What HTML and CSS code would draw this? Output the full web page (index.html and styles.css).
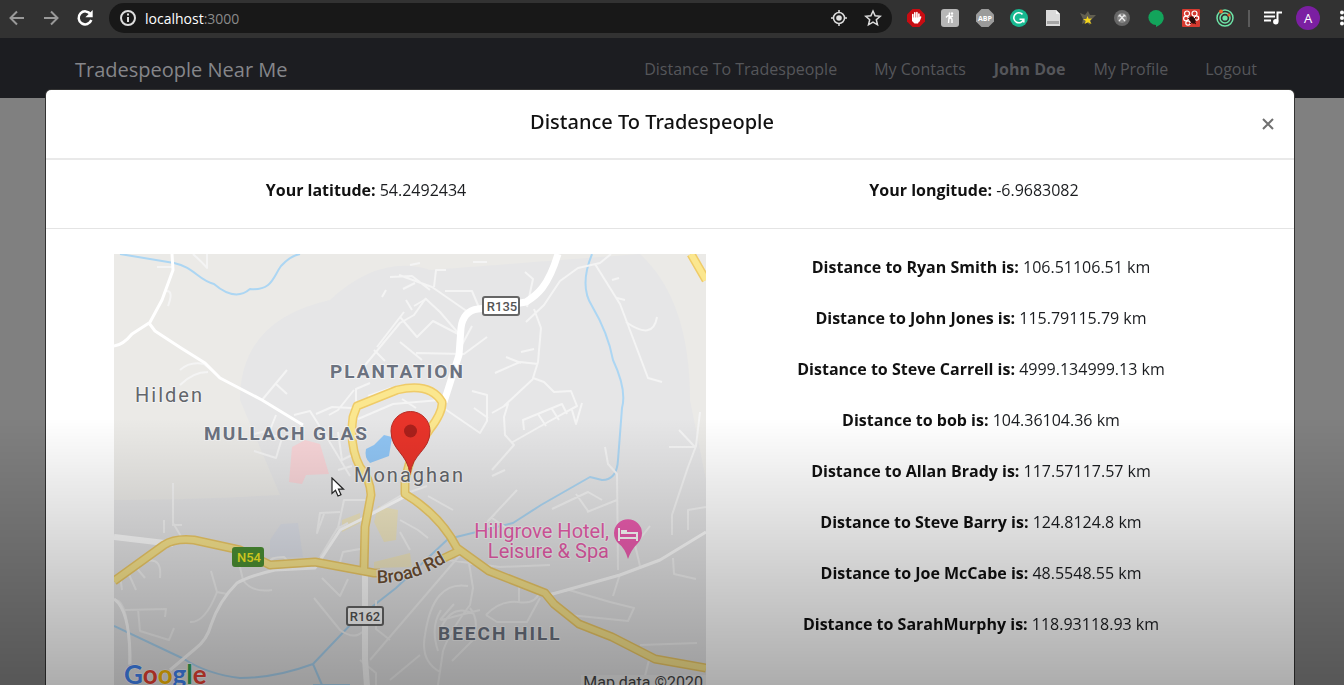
FILE: index.html
```html
<!DOCTYPE html>
<html lang="en">
<head>
<meta charset="utf-8">
<title>Tradespeople Near Me</title>
<link rel="stylesheet" href="styles.css">
</head>
<body>
<header class="toolbar">
  <div class="toolbar-nav">
    <button class="tool dim" aria-label="Back"><svg width="18" height="18" viewBox="0 0 18 18"><path d="M16 9H2.500M9 2.500L2.500 9L9 15.500" class="line"/></svg></button>
    <button class="tool dim" aria-label="Forward"><svg width="18" height="18" viewBox="0 0 18 18"><path d="M2 9H15.500M9 2.500L15.500 9L9 15.500" class="line"/></svg></button>
    <button class="tool" aria-label="Reload"><svg width="18" height="18" viewBox="0 0 18 18"><path d="M14.600 5.300A6.500 6.500 0 1 0 15.300 11" class="line thick"/><path d="M16.700 1V8.300H9.400Z" fill="currentColor"/></svg></button>
  </div>
  <div class="address">
    <button class="tool" aria-label="Site information"><svg width="18" height="18" viewBox="0 0 18 18"><circle cx="9" cy="9" r="7" class="line"/><path d="M9 8V13M9 4.600V6.600" class="line"/></svg></button>
    <span class="url" role="textbox" aria-label="Address" contenteditable="true" spellcheck="false">localhost<span class="port">:3000</span></span>
    <button class="tool" aria-label="Location"><svg width="18" height="18" viewBox="0 0 18 18"><circle cx="9" cy="9" r="5.500" class="line thin"/><circle cx="9" cy="9" r="2.800" fill="currentColor"/><path d="M9 1V4M9 14V17M1 9H4M14 9H17" class="line thin"/></svg></button>
    <button class="tool" aria-label="Bookmark"><svg width="18" height="18" viewBox="0 0 18 18"><path d="M9 2L11.100 6.800L16.200 7.300L12.300 10.700L13.500 15.800L9 13.100L4.500 15.800L5.700 10.700L1.800 7.300L6.900 6.800Z" class="line thin"/></svg></button>
  </div>
  <div class="extensions">
    <button class="tool" aria-label="Content blocker"><svg width="18" height="18" viewBox="0 0 18 18"><path d="M5.500 0H12.500L18 5.500V12.500L12.500 18H5.500L0 12.500V5.500Z" fill="#c80c12"/><path d="M5.800 10V5.500M7.800 9V3.800M9.900 9V3.500M11.900 10V5M13.600 8L12 12" stroke="#fff" stroke-width="1.600" stroke-linecap="round"/><path d="M5 8.500H12.700V11L11 14.500H7.500L5 12Z" fill="#fff"/></svg></button>
    <button class="tool" aria-label="Coupons"><svg width="18" height="18" viewBox="0 0 18 18"><rect width="18" height="18" rx="3" fill="#b7b7b7"/><path d="M8.500 3.500L7.500 14M5 8.500Q7 6 8 7T12 7M8 9.500Q11 8 11 11V14" fill="none" stroke="#fff" stroke-width="1.400"/><circle cx="11" cy="4.500" r="1.200" fill="#fff"/></svg></button>
    <button class="tool" aria-label="Ad filter"><svg width="18" height="18" viewBox="0 0 18 18"><path d="M5.500 0H12.500L18 5.500V12.500L12.500 18H5.500L0 12.500V5.500Z" fill="#9b9b9b"/><text x="9" y="12" class="abp">ABP</text></svg></button>
    <button class="tool" aria-label="Grammar"><svg width="18" height="18" viewBox="0 0 18 18"><circle cx="9" cy="9" r="9" fill="#17b890"/><path d="M12.500 5.400A5 5 0 1 0 13.600 10.300M9.500 10.200H13.800V13.400" fill="none" stroke="#fff" stroke-width="1.600"/></svg></button>
    <button class="tool" aria-label="Documents"><svg width="18" height="18" viewBox="0 0 18 18"><path d="M2 1H12L16 5V17H2Z" fill="#dadada"/><path d="M12 1V5H16" fill="#f5f5f5"/><path d="M3 12H15V15H3Z" fill="#a5a5a5"/></svg></button>
    <button class="tool" aria-label="Favourites"><svg width="18" height="18" viewBox="0 0 18 18"><path d="M1 4L6 6L9 2L11 6L17 6L12 11L11 16L7 13L3 15L4 10Z" fill="#625f51"/><path d="M8.500 7L9.700 9.700L13 9.500L10.800 11.700L12.500 15L9 13.200L5.500 15L6.800 12L4 10H7.300Z" fill="#f5d51b"/></svg></button>
    <button class="tool" aria-label="Tools"><svg width="18" height="18" viewBox="0 0 18 18"><circle cx="9" cy="9" r="8" fill="#666"/><circle cx="9" cy="9" r="5" fill="#888"/><path d="M6 12L11.500 6M12 12L6.500 6M5.500 7.500L7.500 5.500M10.500 5.500L12.500 7.500" stroke="#eee" stroke-width="1.200"/></svg></button>
    <button class="tool" aria-label="Chat"><svg width="18" height="18" viewBox="0 0 18 18"><path d="M9 14V18Q17 14.500 16.600 8.500Z" fill="#13a45b"/><circle cx="9" cy="8.500" r="7.600" fill="#13a45b"/></svg></button>
    <button class="tool" aria-label="Debugger"><svg width="18" height="18" viewBox="0 0 18 18"><rect width="18" height="18" rx="1" fill="#d63a30"/><g fill="none" stroke="#fff" stroke-width="1.200"><circle cx="5" cy="4.500" r="2.500"/><circle cx="12.500" cy="4.500" r="2.500"/><circle cx="4" cy="9.500" r="2.400"/><circle cx="14.500" cy="9" r="2.200"/><circle cx="6" cy="14" r="2.200"/></g><ellipse cx="10.500" cy="11" rx="2.500" ry="4" fill="#2b0d0b" transform="rotate(-35 10.500 11)"/><path d="M6 9L14 15M8 15L14 8" stroke="#2b0d0b"/></svg></button>
    <button class="tool" aria-label="Targets"><svg width="18" height="18" viewBox="0 0 18 18"><g fill="none" stroke="#6ee5a8" stroke-width="1.500"><circle cx="9" cy="9" r="8"/><circle cx="9" cy="9" r="5"/></g><circle cx="9" cy="9" r="2.600" fill="#6ee5a8"/><circle cx="5" cy="2.500" r="2" fill="#e8672e"/><circle cx="13" cy="6" r="1.500" fill="#e8672e"/></svg></button>
  </div>
  <span class="divider"></span>
  <button class="tool" aria-label="Media"><svg width="18" height="18" viewBox="0 0 18 18"><path d="M0 3.500H11M0 7.500H11M0 11.500H7M13.500 12.500V3.500H18" class="line"/><circle cx="11.800" cy="12.800" r="2.700" fill="currentColor"/></svg></button>
  <button class="avatar" aria-label="Account">A</button>
  <button class="tool more" aria-label="More"><svg width="6" height="18" viewBox="0 0 6 18"><g fill="currentColor"><circle cx="4" cy="3.500" r="2"/><circle cx="4" cy="9" r="2"/><circle cx="4" cy="14.500" r="2"/></g></svg></button>
</header>

<nav class="site-nav">
  <a class="brand" href="#">Tradespeople Near Me</a>
  <a class="nav-link" href="#">Distance To Tradespeople</a>
  <a class="nav-link wide" href="#">My Contacts</a>
  <a class="nav-link user" href="#">John Doe</a>
  <a class="nav-link" href="#">My Profile</a>
  <a class="nav-link wide" href="#">Logout</a>
</nav>

<div class="modal-layer">
  <section class="modal" role="dialog" aria-labelledby="modal-title">
    <div class="modal-header">
      <h1 class="modal-title" id="modal-title">Distance To Tradespeople</h1>
      <button class="close" aria-label="Close"><svg width="12" height="12" viewBox="0 0 12 12"><path d="M1 1L11 11M11 1L1 11" class="line"/></svg></button>
    </div>
    <div class="coords">
      <p class="row"><b>Your latitude:</b> 54.2492434</p>
      <p class="row"><b>Your longitude:</b> -6.9683082</p>
    </div>
    <div class="modal-body">
      <svg class="map" viewBox="114 254 592 460" role="img" aria-label="Map of Monaghan">
        <rect x="114" y="254" width="592" height="460" fill="#ebeae7"/>
        <path d="M240 400Q240 320 330 300Q380 254 430 270L640 254Q690 300 690 400L706 480V714H114V500Q180 500 280 495Z" fill="#e6e6e7"/>
        <path d="M292 447L305 440L320 444L329 474L306 475L302 484L289 482Z" fill="#f8d5d8"/>
        <path d="M366 449L374 445L384 435L392 437L389 456L370 463Q364 458 366 449Z" fill="#90c5f4"/>
        <path d="M281 524L298 523L303 557L270 557L270 540Z" fill="#dfe2ea"/>
        <path d="M378 506L398 510L396 540L384 542L374 522ZM342 520L360 513L360 523L342 532ZM374 562L410 553L412 567L374 568Z" fill="#f1e8c4"/>
        <g class="water">
          <path d="M120 254L174 263C194 267 198 280 214 284Q235 302 250 289C272 291 273 277 281 266Q290 256 300 254"/>
          <path d="M592 254Q579 286 592 306Q608 333 613 360Q627 390 622 408L618 460Q617 480 602 480L590 477L541 505L513 523L448 539L396 588L354 621L313 664Q275 678 240 678Q207 674 184 659L114 626M313 664L322 685M313 685H350"/>
        </g>
        <g class="minor">
          <path d="M193 254Q204 264 207 268V254M157 267H172M166 291Q174 290 168 306M180 370Q190 361 204 364L216 374M180 385Q193 372 208 372M262 400L287 370M276 384L287 394M254 451L276 458L282 438M294 415L310 411L329 441L350 476M316 414L332 407L352 408M356 408L356 389L370 383M354 390L338 410L329 415M356 376L400 323L414 315L426 298"/>
          <path d="M374 350L385 361M377 347L404 312M390 277L412 276L430 290M399 275L432 287L468 312M434 287L436 270L446 270M445 291L472 291L480 310M414 306L426 299L440 312L459 334M400 317L417 337L433 321L458 334M400 342L422 360M416 353L464 354L487 337M457 354L472 326M391 388L368 396M358 419L393 404L440 400M402 399L416 408"/>
          <path d="M445 409L480 433L487 421V395L472 391M492 413L508 404L504 417L505 435L514 445L492 470M511 443L548 422L577 406L571 391L554 392L544 382L533 378L538 362L541 328L534 309M524 430L523 420L562 404L567 414M538 414L546 426M552 409L559 420M572 410L576 424L582 403M504 406L533 379M495 373L520 362L538 364M506 357L521 363M534 349L521 352M526 322L544 305L560 281L578 268L600 263L611 254M595 264L620 304L628 325L648 378L662 382M612 280L619 278M617 298L625 300M626 322Q653 341 657 317M527 307L533 279L525 272M473 262H487"/>
          <path d="M605 447L608 464L617 474L618 570M700 412L696 446L688 467L672 515L672 535M695 447H669M679 430L695 447M552 509L588 492L602 500M576 494L588 511M587 512L617 500M495 514L488 521L517 490M492 518L508 529M505 470L492 476M173 483V523L182 538M164 520V533M172 525L182 525M324 514L317 533L320 513L340 512M320 557L337 529L348 523M338 528L344 500H370M360 520L410 490M400 532L410 550M360 549L343 552L338 569M322 578L340 596L348 579M270 563Q269 557 284 557L290 564M239 563L243 580Q252 593 272 590"/>
          <path d="M120 575L122 590M127 570L136 590M134 565L145 578M148 561Q162 558 160 578M211 571L217 592L227 594M217 592Q205 623 190 622M116 600Q130 602 129 665M125 610L166 609L165 617M138 609L140 631L169 640L174 628M314 598L340 630Q354 640 362 632M370 660L460 555M376 600V629L390 640M440 559L500 567L550 565M469 563L473 588L470 605Q450 631 443 651L438 685M468 586Q433 580 425 635Q420 661 440 672M470 608Q480 620 473 640L452 661M440 630Q452 602 474 614M441 620L480 610M441 610Q430 627 438 651M440 620L454 604M486 615Q500 600 518 602Q536 605 540 591M486 615L497 622L527 622L540 598M519 585V602M544 595L569 590L610 602L634 608L628 621L560 614M640 645L697 643M649 660L645 676M613 596L620 574M640 566L635 545L650 526M673 558L674 574L696 579M688 530V510L706 507M400 520L418 530L428 538M410 492L427 486M428 496L453 510M360 660L376 673V685M390 680L420 655"/>
          <path d="M382 297L386 290M276 415L270 430L254 434M266 434L294 440M338 432L342 460L352 455M338 470L352 466M410 265L420 263M403 289L415 283M406 300L412 310M474 408L488 418"/>
        </g>
        <g class="road">
          <path d="M172 254L173 270L162 300L149 324M114 346Q123 345 132 334L149 323L155 331L181 348L205 363L220 378L262 400L280 411L303 425"/>
          <path d="M114 599Q129 609 130 655V664M170 670L195 649Q207 640 211 625Q219 601 237 583Q249 576 275 570L315 568L340 530L360 520L406 496"/>
          <path d="M549 595L620 575L660 560L706 532"/>
        </g>
        <path class="road medium" d="M114 537L173 544M365 570V659L369 714"/>
        <path class="road major" d="M558 254C548 287 537 295 526 302L508 305L478 309Q463 311 461 328L459 355L444 402"/>
        <path class="highway-edge" d="M114 581L164 545Q175 538 194 540L240 550L270 565L315 562L374 573H380M364 570L365 527L371 495Q370 478 360 467Q349 446 353 417L357 406L397 390Q430 382 442 402Q443 412 430 429L411 457L405 480V494Q440 515 457 548L489 571L512 580L545 593L554 604L579 624L612 637L655 659L706 668M440 560L461 550M691 254L706 280"/>
        <path class="highway" d="M114 581L164 545Q175 538 194 540L240 550L270 565L315 562L374 573H380M364 570L365 527L371 495Q370 478 360 467Q349 446 353 417L357 406L397 390Q430 382 442 402Q443 412 430 429L411 457L405 480V494Q440 515 457 548L489 571L512 580L545 593L554 604L579 624L612 637L655 659L706 668M440 560L461 550M691 254L706 280"/>
        <g class="shield"><rect x="483" y="297" width="36" height="18" rx="2"/><text x="502" y="311">R135</text><rect x="347" y="607" width="36" height="18" rx="2"/><text x="365" y="621">R162</text></g>
        <g class="shield green"><rect x="233" y="548" width="30" height="18" rx="2"/><text x="249" y="562">N54</text></g>
        <g class="label district"><text x="330" y="378">PLANTATION</text><text x="204" y="440">MULLACH GLAS</text><text x="438" y="640">BEECH HILL</text></g>
        <path d="M410 475C408 453 391 451 391 431A19.500 19.500 0 0 1 430 431C430 451 412 453 410 475Z" fill="#e8342a" stroke="#b72d26"/>
        <circle cx="410.500" cy="431" r="6.500" fill="#a9201b"/>
        <g class="label town"><text x="135" y="402">Hilden</text><text x="354" y="482">Monaghan</text></g>
        <g class="label hotel"><text x="609" y="538">Hillgrove Hotel,</text><text x="609" y="558">Leisure &amp; Spa</text></g>
        <path id="broad-road" d="M377 583Q414 584 454 557" fill="none"/>
        <text class="label street"><textPath href="#broad-road">Broad Rd</textPath></text>
        <path d="M628 559Q625 548 618 543A14 14 0 1 1 638 543Q631 550 628 559Z" fill="#ed5db0"/>
        <path d="M619 528V541M637 541V533H621M619 538H637M621 531H627" fill="none" stroke="#fff" stroke-width="2"/>
        <text class="google" x="124" y="684"><tspan fill="#4285f4">G</tspan><tspan fill="#ea4335">o</tspan><tspan fill="#fbbc05">o</tspan><tspan fill="#4285f4">g</tspan><tspan fill="#34a853">l</tspan><tspan fill="#ea4335">e</tspan></text>
        <rect x="581" y="675" width="125" height="18" fill="#eee"/>
        <text class="credit" x="703" y="688">Map data ©2020</text>
      </svg>
      <div class="distances">
        <p class="row"><b>Distance to Ryan Smith is:</b> 106.51106.51 km</p>
        <p class="row"><b>Distance to John Jones is:</b> 115.79115.79 km</p>
        <p class="row"><b>Distance to Steve Carrell is:</b> 4999.134999.13 km</p>
        <p class="row"><b>Distance to bob is:</b> 104.36104.36 km</p>
        <p class="row"><b>Distance to Allan Brady is:</b> 117.57117.57 km</p>
        <p class="row"><b>Distance to Steve Barry is:</b> 124.8124.8 km</p>
        <p class="row"><b>Distance to Joe McCabe is:</b> 48.5548.55 km</p>
        <p class="row"><b>Distance to SarahMurphy is:</b> 118.93118.93 km</p>
      </div>
    </div>
  </section>
</div>
<div class="shade"></div>
<svg class="cursor" width="14" height="21" viewBox="0 0 14 21"><path d="M1 1V16.500L4.500 13.300L7 19L10 17.700L7.500 12.200H12.500Z" fill="#fff" stroke="#222" stroke-width="1.200"/></svg>
</body>
</html>
```
FILE: styles.css
```css
* {
  box-sizing: border-box;
}

body {
  margin: 0;
  height: 100vh;
  overflow: hidden;
  background: #808080;
  color: #1b1d20;
  font: 16px/27px "Open Sans", "Noto Sans", sans-serif;
}

button {
  padding: 0;
  border: 0;
  background: none;
  color: inherit;
  font: inherit;
}

a {
  color: inherit;
  text-decoration: none;
}

.line {
  fill: none;
  stroke: currentColor;
  stroke-width: 2;
}

.line.thin {
  stroke-width: 1.5;
}

.line.thick {
  stroke-width: 2.5;
}

/* Browser toolbar */
.toolbar {
  display: flex;
  align-items: center;
  height: 38px;
  padding: 0 0 2px 8px;
  background: #323232;
  color: #fff;
}

.tool {
  display: flex;
  flex: none;
}

.dim {
  color: #999;
}

.toolbar-nav {
  display: flex;
  gap: 16px;
  margin-right: 15px;
}

.address {
  display: flex;
  flex: 1;
  align-items: center;
  gap: 16px;
  height: 30px;
  padding: 0 10px;
  border-radius: 15px;
  background: #181818;
  color: #ddd;
}

.url {
  flex: 1;
  margin-left: -8px;
  color: #fff;
  font-size: 14px;
  outline: none;
}

.port {
  color: #8a8a8a;
}

.extensions {
  display: flex;
  flex: none;
  justify-content: space-between;
  width: 327px;
  margin-left: 15px;
}

.abp {
  fill: #fff;
  font: bold 7px "Open Sans", sans-serif;
  text-anchor: middle;
}

.divider {
  width: 2px;
  height: 17px;
  margin: 0 14px;
  background: #5b5b5b;
}

.avatar {
  width: 24px;
  height: 24px;
  margin: 0 18px 0 14px;
  border-radius: 50%;
  background: #7b1fa2;
  font-size: 13px;
  line-height: 24px;
}

/* Site navigation */
.site-nav {
  display: flex;
  align-items: center;
  height: 60px;
  padding: 2px 87px 0 75px;
  background: #1c1d21;
  color: #55565a;
}

.brand {
  margin-right: auto;
  color: #85868a;
  font-size: 20px;
}

.nav-link {
  margin-left: 28px;
}

.nav-link.wide {
  margin-left: 37px;
}

.user {
  font-weight: 700;
}

/* Dialog */
.modal-layer {
  position: fixed;
  inset: 90px 0 0;
  padding: 0 50px 0 46px;
}

.modal {
  border-radius: 5px;
  background: #fff;
  box-shadow: 0 0 0 1px #333;
}

.modal-header {
  display: flex;
  align-items: center;
  padding: 16px 20px 20px 16px;
  border-bottom: 2px solid #e9e9e9;
}

.modal-title {
  flex: 1;
  margin: 0;
  color: #111;
  font-family: "Noto Sans", sans-serif;
  font-size: 20px;
  font-weight: 500;
  line-height: 32px;
  text-align: center;
}

.close {
  display: flex;
  padding: 4px 0 0 20px;
  color: #707070;
}

.coords {
  display: grid;
  grid-template-columns: 1fr 1fr;
  padding: 17px 16px 24px;
  border-bottom: 1px solid #e4e4e4;
  text-align: center;
}

.row {
  margin: 0;
}

.row b {
  color: #111;
}

.modal-body {
  display: grid;
  grid-template-columns: 592fr 550fr;
  padding: 25px 38px 25px 68px;
}

.distances {
  display: flex;
  flex-direction: column;
  gap: 24px;
  text-align: center;
}

/* Map */
.map {
  display: block;
  width: 100%;
  font-family: Roboto, sans-serif;
}

.water,
.minor,
.road,
.highway,
.highway-edge {
  fill: none;
  stroke-linejoin: round;
}

.water {
  stroke: #acd6f3;
  stroke-width: 2;
}

.minor {
  stroke: #f4f4f4;
  stroke-width: 2;
}

.road {
  stroke: #fff;
  stroke-width: 3;
}

.road.medium {
  stroke-width: 6;
}

.road.major {
  stroke-width: 7;
}

.highway-edge {
  stroke: #efcb68;
  stroke-width: 9;
}

.highway {
  stroke: #fbe78f;
  stroke-width: 6;
}

.shield {
  fill: #fff;
  stroke: #666;
  stroke-width: 2;
}

.shield text {
  fill: #555;
  stroke: none;
  font-size: 13px;
  font-weight: 500;
  text-anchor: middle;
}

.shield.green {
  fill: #4c9033;
  stroke: #4c9033;
}

.shield.green text {
  fill: #f5ec25;
}

.label {
  paint-order: stroke;
  stroke: #f3f3f3;
  stroke-width: 2;
  stroke-linejoin: round;
}

.district {
  fill: #6b7280;
  font-size: 19px;
  font-weight: 700;
  letter-spacing: 2px;
}

.town {
  fill: #63666b;
  font-size: 20px;
  letter-spacing: 2px;
}

.hotel {
  fill: #e85dab;
  font-size: 20px;
  text-anchor: end;
}

.street {
  fill: #6e5034;
  font-size: 18px;
  font-weight: 500;
}

.google {
  stroke: #fff;
  stroke-width: 1;
  paint-order: stroke;
  font-family: Lato, sans-serif;
  font-size: 26px;
  font-weight: 700;
}

.credit {
  fill: #444;
  font-size: 16px;
  text-anchor: end;
}

/* Darkening toward the bottom of the window */
.shade {
  position: fixed;
  inset: 61% 0 0;
  background: linear-gradient(transparent, rgba(0, 0, 0, 0.32));
  pointer-events: none;
}

.cursor {
  position: fixed;
  left: 331px;
  top: 477px;
  pointer-events: none;
}
```
